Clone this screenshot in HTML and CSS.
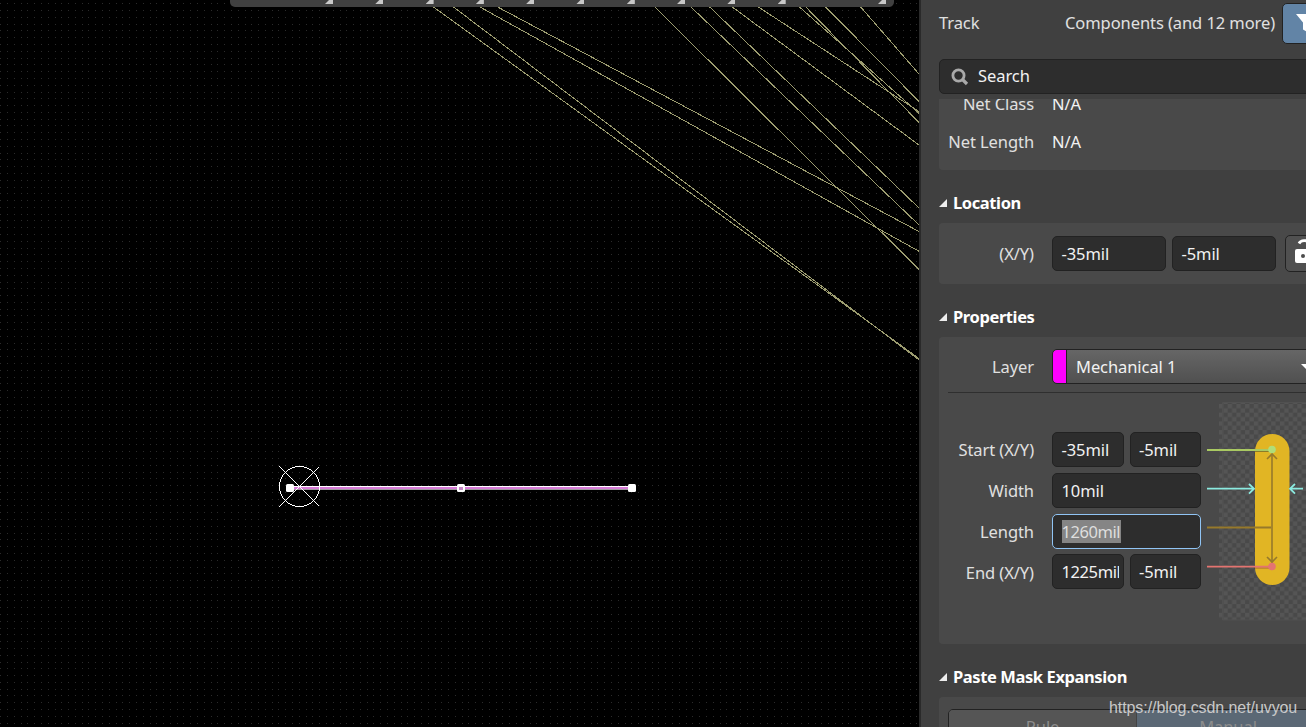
FILE: index.html
```html
<!DOCTYPE html>
<html lang="en">
<head>
  <meta charset="UTF-8" />
  <meta name="viewport" content="width=device-width, initial-scale=1.0"/>
  <title>PCB Editor</title>
  <link rel="stylesheet" href="styles.css">
</head>
<body>
  <div class="app">
    <main class="board">
      <canvas id="grid" class="grid" width="919" height="727"></canvas>
      <svg class="drawing" width="919" height="727">
        <g class="nets">
          <path d="M433.5 7L919 358.5M453.5 7L919 360M480 7L919 251.3M497.7 7L919 231.5"/>
          <path d="M655 7L919 269.5M691 7L919 225M709.7 7L919 208M732.3 7L919 145M758.3 7L919 111.6"/>
          <path d="M799.5 7L919 113.3M805.8 7L919 122.5M825.7 7L919 101.5M860.7 7L919 74"/>
        </g>
        <!-- selected track -->
        <g shape-rendering="crispEdges">
          <rect x="290" y="486" width="342" height="1" fill="#fff"/>
          <rect x="290" y="487" width="342" height="2" fill="#d67ad6"/>
          <rect x="290" y="489" width="342" height="1" fill="#a29aa2"/>
          <path d="M279 466l40 40M279 507l40-40" stroke="#fff"/>
          <circle cx="299.5" cy="486.5" r="20" fill="none" stroke="#fff"/>
        </g>
        <rect class="handle" x="286" y="484" width="8" height="8" rx="1.5"/>
        <rect class="handle" x="628" y="484" width="8" height="8" rx="1.5"/>
        <rect class="handle" x="457" y="484" width="8" height="8" rx="1.5"/>
        <rect x="459" y="487" width="4" height="3" fill="#c586c5"/>
      </svg>
      <div class="toolbar">
        <i></i><i></i><i></i><i></i><i></i><i></i><i></i><i></i><i></i><i></i><i></i>
      </div>
    </main>

    <aside class="panel">
      <header class="panel-head">
        <span class="object">Track</span>
        <span class="filter-text">Components (and 12 more)</span>
        <button class="filter-btn">
          <svg width="24" height="20"><path d="M0 0h20l-7.500 8.500v10l-5.500-3v-7z" fill="#fff"/></svg>
        </button>
      </header>

      <div class="search">
        <svg width="18" height="18" fill="none" stroke="#a9a9a9">
          <circle cx="7.500" cy="7.500" r="5.600" stroke-width="2.800"/>
          <path d="M11.500 11.500l4.500 4.500" stroke-width="3.200"/>
        </svg>
        <span>Search</span>
      </div>

      <section class="box net">
        <div class="row net-class"><label>Net Class</label><span>N/A</span></div>
        <div class="row"><label>Net Length</label><span>N/A</span></div>
      </section>

      <h3><i class="arrow"></i>Location</h3>
      <section class="box location">
        <div class="row">
          <label>(X/Y)</label>
          <div class="fields">
            <div class="input loc-x">-35mil</div>
            <div class="input loc-y">-5mil</div>
            <button class="lock-btn">
              <svg width="20" height="24" fill="none">
                <path d="M4 4.500C6 0.500 13 0.500 13.500 5v5" stroke="#fff" stroke-width="2.800"/>
                <rect x="0" y="10" width="16" height="14" rx="2" fill="#fff"/>
                <circle cx="8" cy="17" r="2" fill="#4c4c4c"/>
              </svg>
            </button>
          </div>
        </div>
      </section>

      <h3><i class="arrow"></i>Properties</h3>
      <section class="box properties">
        <div class="row layer">
          <label>Layer</label>
          <div class="select"><i class="swatch"></i><span>Mechanical 1</span><i class="caret"></i></div>
        </div>
        <div class="geometry">
          <div class="rows">
            <div class="row"><label>Start (X/Y)</label><div class="fields"><div class="input">-35mil</div><div class="input">-5mil</div></div></div>
            <div class="row"><label>Width</label><div class="fields"><div class="input">10mil</div></div></div>
            <div class="row"><label>Length</label><div class="fields"><div class="input focus"><mark>1260mil</mark></div></div></div>
            <div class="row end"><label>End (X/Y)</label><div class="fields"><div class="input"><span class="clip">1225mil</span></div><div class="input">-5mil</div></div></div>
          </div>
          <svg class="diagram" width="110" height="220" fill="none">
            <defs>
              <pattern id="checker" x="12" y="2" width="8.700" height="8.700" patternUnits="userSpaceOnUse">
                <path d="M0 0h4.350v4.350h-4.350zM4.350 4.350h4.350v4.350h-4.350z" fill="#555"/>
              </pattern>
            </defs>
            <rect x="12" y="1" width="98" height="217" fill="url(#checker)"/>
            <path d="M110 .500H15.500v217.500H110" stroke="#515151"/>
            <rect x="48" y="32" width="34.500" height="151" rx="17.250" fill="#e1b524"/>
            <path d="M65 51v111" stroke="#96792b" stroke-width="1.600"/>
            <path d="M60 57l5-5 5 5M60 155l5 5 5-5" stroke="#96792b" stroke-width="1.600"/>
            <path d="M0 125.500h64" stroke="#96792b" stroke-width="1.800"/>
            <path d="M48 49.500h18" stroke="#8b7c28" stroke-width="1"/>
            <path d="M0 48h65" stroke="#a9c962" stroke-width="1.800"/>
            <circle cx="65" cy="47.500" r="3.800" fill="#b0de78"/>
            <path d="M0 86.700h47M42 82l5 4.700-5 5M96 86.700H83M88 82l-5 4.700 5 5" stroke="#8beae0" stroke-width="1.800"/>
            <path d="M48 166h18" stroke="#a8643a" stroke-width="1"/>
            <path d="M0 164.700h65" stroke="#e47470" stroke-width="1.800"/>
            <circle cx="65" cy="164.500" r="3.800" fill="#e47470"/>
          </svg>
        </div>
      </section>

      <h3><i class="arrow"></i>Paste Mask Expansion</h3>
      <section class="box paste">
        <div class="segments"><span>Rule</span><span class="active">Manual</span></div>
      </section>
    </aside>
  </div>
  <div class="watermark">https://blog.csdn.net/uvyou</div>

  <script>
    // 25mil grid around the board origin
    const ctx = document.getElementById("grid").getContext("2d");
    const step = 6.786;
    ctx.fillStyle = "#2b2b2b";
    for (let i = -44; i < 92; i++) {
      for (let j = -71; j < 36; j++) {
        ctx.fillRect(Math.floor(299.3 + i * step), Math.floor(485.6 + j * step), 1, 1);
      }
    }
  </script>
</body>
</html>
```
FILE: styles.css
```css
* {
  box-sizing: border-box;
}

body {
  margin: 0;
  background: #000;
  color: #f2f2f2;
  font-family: "Noto Sans", "Open Sans", sans-serif;
  font-size: 16.5px;
  letter-spacing: -0.08px;
  overflow: hidden;
}

.app {
  display: flex;
  width: 1306px;
  height: 727px;
  overflow: hidden;
}

.board {
  position: relative;
  flex: 0 0 919px;
  background: #000;
}

.grid,
.drawing {
  position: absolute;
  top: 0;
  left: 0;
}

.nets {
  stroke: #9d9d70;
  fill: none;
  shape-rendering: crispEdges;
}

.handle {
  fill: #fff;
}

.toolbar {
  position: absolute;
  top: 0;
  left: 230px;
  width: 664px;
  height: 7px;
  background: #404040;
  border-radius: 0 0 5px 5px;
  display: flex;
  padding-left: 95px;
  gap: 42.3px;
}

.toolbar i {
  flex: 0 0 8px;
  height: 4px;
  background: #c8c8c8;
  clip-path: polygon(50% 0, 100% 0, 100% 100%, 0 100%);
}

.toolbar i:last-child {
  margin-left: 50px;
}

/* properties panel */
.panel {
  flex: 0 0 387px;
  height: 727px;
  border-left: 2px solid #2a2a2a;
  background: #404040;
  padding-left: 18px;
  overflow: hidden;
}

.panel-head {
  display: flex;
  align-items: center;
  height: 59px;
  padding-bottom: 12px;
  width: 400px;
  color: #e0e0e0;
}

.panel-head span {
  padding-bottom: 2px;
}

.object {
  width: 126px;
}

.filter-text {
  width: 217px;
  white-space: nowrap;
}

.filter-btn {
  width: 48px;
  height: 41px;
  padding: 0 0 0 13px;
  border: 1px solid #222;
  border-radius: 5px;
  background: #6284a6;
}

.filter-btn svg,
.lock-btn svg {
  display: block;
}

.search {
  display: flex;
  align-items: center;
  gap: 9px;
  width: 400px;
  height: 35px;
  padding-left: 11px;
  padding-bottom: 3px;
  background: #2d2d2d;
  border: 1px solid #222;
  border-radius: 5px;
}

.search svg {
  margin-top: 3px;
}

.box {
  width: 400px;
  background: #494949;
  border-radius: 4px;
}

.row {
  display: flex;
  align-items: center;
  height: 35px;
}

.row label {
  width: 95px;
  margin-right: 18px;
  text-align: right;
  white-space: nowrap;
  color: #e0e0e0;
}

.net {
  height: 71px;
  margin-top: 5px;
  overflow: hidden;
  border-radius: 0 0 4px 4px;
}

.net-class {
  margin-top: -13px;
  margin-bottom: 3px;
}

h3 {
  display: flex;
  align-items: center;
  height: 53px;
  margin: 0;
  padding-top: 13px;
  font-size: 16.5px;
  font-weight: 700;
  letter-spacing: -0.4px;
  line-height: 40px;
  color: #fff;
}

.arrow {
  width: 8px;
  height: 8px;
  margin-right: 6px;
  background: #eee;
  clip-path: polygon(100% 0, 100% 100%, 0 100%);
}

.location {
  height: 61px;
  padding-top: 13px;
}

.fields {
  display: flex;
  gap: 6px;
}

.input {
  flex: 1;
  height: 35px;
  padding-left: 8.5px;
  border: 1px solid #222;
  border-radius: 5px;
  background: #2d2d2d;
  line-height: 33px;
  white-space: nowrap;
}

.input.loc-x {
  flex: 0 0 114px;
}

.input.loc-y {
  flex: 0 0 104px;
}

.lock-btn {
  width: 48px;
  height: 37px;
  margin: -1px 0 0 3px;
  padding: 0 0 4px 9px;
  border: 1px solid #222;
  border-radius: 5px;
  background: #505050;
}

.properties {
  height: 307px;
  padding-top: 12px;
}

.layer {
  height: 44px;
  padding-bottom: 8px;
  margin-left: 9px;
  border-bottom: 1px solid #2f2f2f;
}

.layer label {
  width: 86px;
}

.select {
  display: flex;
  align-items: center;
  width: 280px;
  height: 35px;
  border: 1px solid #222;
  border-radius: 5px;
  background: linear-gradient(#666, #505050);
  overflow: hidden;
}

.swatch {
  width: 14px;
  height: 33px;
  margin-right: 9px;
  border-right: 1px solid #222;
  border-radius: 4px 0 0 4px;
  background: #f0f;
}

.caret {
  margin-left: auto;
  margin-right: 18px;
  border: 6px solid transparent;
  border-top-color: #fff;
  border-bottom: 0;
}

.select span {
  width: 220px;
}

.geometry {
  display: flex;
  margin-top: 9px;
}

.rows {
  display: flex;
  flex-direction: column;
  gap: 6px;
  padding-top: 30px;
}

.rows .fields {
  width: 149px;
}

.rows .end {
  margin-top: -1px;
}

.rows .end label {
  padding-top: 1px;
}

.input.focus {
  border-color: #90c4f4;
}

mark {
  display: inline-block;
  width: 59px;
  height: 23px;
  line-height: 23px;
  letter-spacing: -0.45px;
  background: #858585;
  color: #dedede;
}

.clip {
  display: block;
  width: 57px;
  overflow: hidden;
  letter-spacing: -0.4px;
}

.diagram {
  margin-left: 6px;
}

.paste {
  height: 80px;
  padding: 12px 0 0 9px;
}

.segments {
  display: flex;
  height: 36px;
  border: 1px solid #222;
  border-radius: 5px;
  overflow: hidden;
  line-height: 33px;
  text-align: center;
  color: #8c8c8c;
}

.segments span {
  flex: 0 0 187px;
  background: #555;
}

.segments .active {
  border-left: 1px solid #444;
  padding-right: 4px;
  background: #5b6875;
}

.watermark {
  position: absolute;
  left: 1109px;
  top: 698px;
  font-family: "Liberation Sans", Arial, sans-serif;
  font-size: 16px;
  line-height: 20px;
  color: #c9c9c9;
}
```
